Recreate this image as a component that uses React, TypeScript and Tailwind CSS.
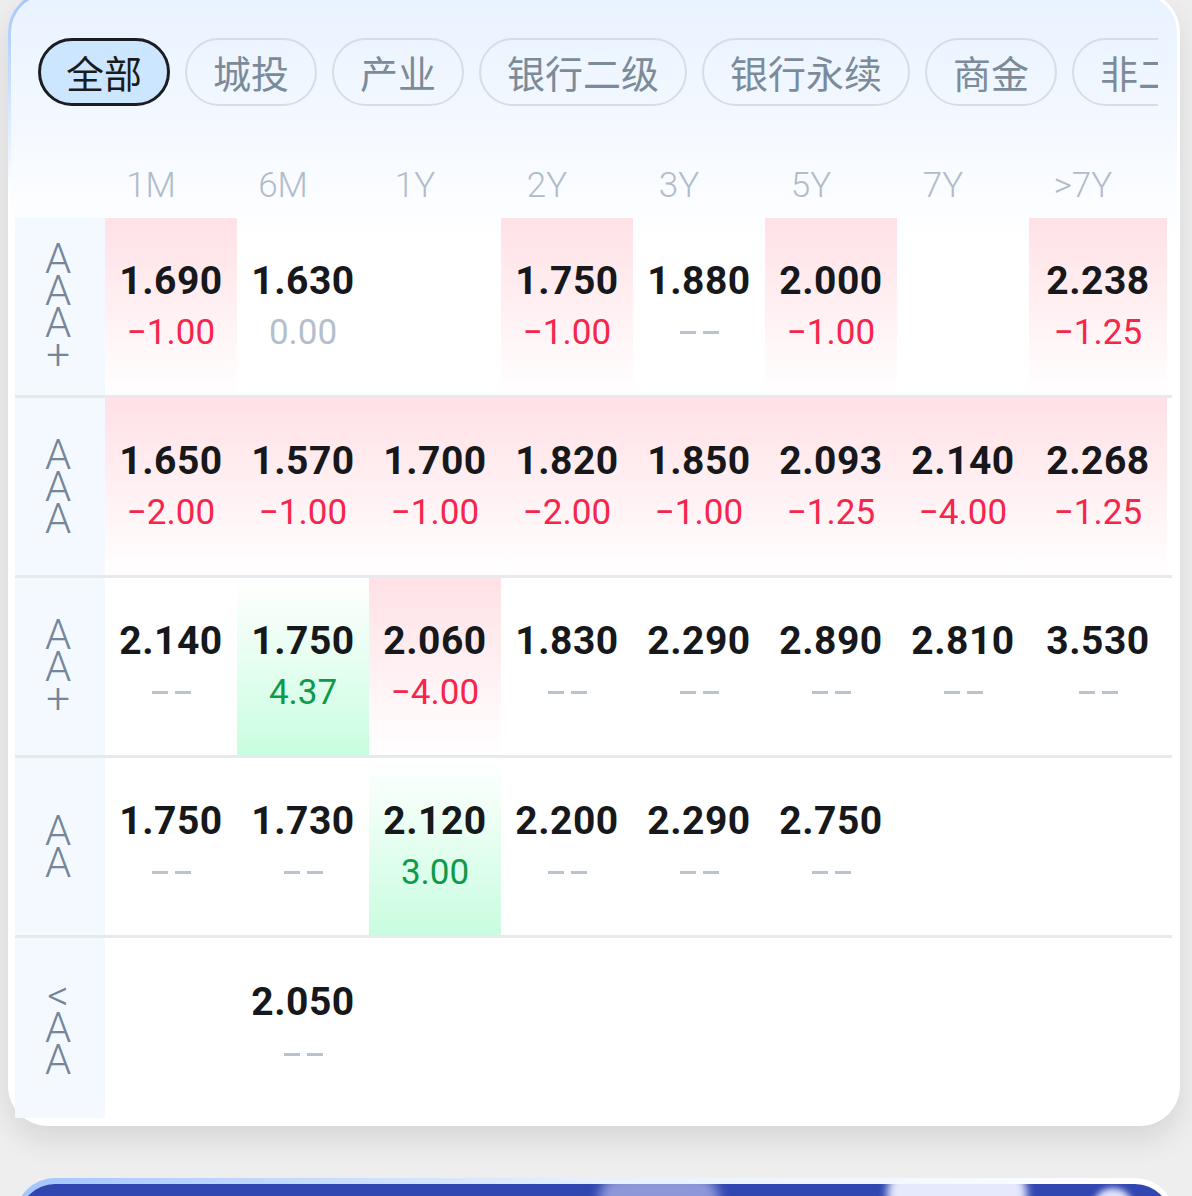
import React, { useState } from 'react';

type Cell = {
    value?: string;
    change?: string;
    tone?: 'down' | 'up' | 'flat' | 'none';
};

const tabs = ['全部', '城投', '产业', '银行二级', '银行永续', '商金', '非二级'];
const terms = ['1M', '6M', '1Y', '2Y', '3Y', '5Y', '7Y', '>7Y'];

const rows: { label: string; cells: Cell[] }[] = [
    {
        label: 'AAA+',
        cells: [
            { value: '1.690', change: '−1.00', tone: 'down' },
            { value: '1.630', change: '0.00', tone: 'flat' },
            {},
            { value: '1.750', change: '−1.00', tone: 'down' },
            { value: '1.880', tone: 'none' },
            { value: '2.000', change: '−1.00', tone: 'down' },
            {},
            { value: '2.238', change: '−1.25', tone: 'down' },
        ],
    },
    {
        label: 'AAA',
        cells: [
            { value: '1.650', change: '−2.00', tone: 'down' },
            { value: '1.570', change: '−1.00', tone: 'down' },
            { value: '1.700', change: '−1.00', tone: 'down' },
            { value: '1.820', change: '−2.00', tone: 'down' },
            { value: '1.850', change: '−1.00', tone: 'down' },
            { value: '2.093', change: '−1.25', tone: 'down' },
            { value: '2.140', change: '−4.00', tone: 'down' },
            { value: '2.268', change: '−1.25', tone: 'down' },
        ],
    },
    {
        label: 'AA+',
        cells: [
            { value: '2.140', tone: 'none' },
            { value: '1.750', change: '4.37', tone: 'up' },
            { value: '2.060', change: '−4.00', tone: 'down' },
            { value: '1.830', tone: 'none' },
            { value: '2.290', tone: 'none' },
            { value: '2.890', tone: 'none' },
            { value: '2.810', tone: 'none' },
            { value: '3.530', tone: 'none' },
        ],
    },
    {
        label: 'AA',
        cells: [
            { value: '1.750', tone: 'none' },
            { value: '1.730', tone: 'none' },
            { value: '2.120', change: '3.00', tone: 'up' },
            { value: '2.200', tone: 'none' },
            { value: '2.290', tone: 'none' },
            { value: '2.750', tone: 'none' },
            {},
            {},
        ],
    },
    {
        label: '<AA',
        cells: [{}, { value: '2.050', tone: 'none' }, {}, {}, {}, {}, {}, {}],
    },
];

const Dashes = () => (
    <div className="flex h-[52px] items-center gap-[7px]">
        <span className="block h-[3px] w-[16px] bg-[#b9c3d0]" />
        <span className="block h-[3px] w-[16px] bg-[#b9c3d0]" />
    </div>
);

const RateCell: React.FC<{ cell: Cell }> = ({ cell }) => {
    const bg =
        cell.tone === 'down'
            ? 'bg-gradient-to-b from-[#ffe1e6] to-white'
            : cell.tone === 'up'
              ? 'bg-gradient-to-b from-white to-[#c8fde0]'
              : '';

    return (
        <div className={`flex flex-col items-center justify-center ${bg}`}>
            {cell.value && (
                <div className="text-[39px] font-bold leading-[52px] tracking-[0.5px] text-[#16181b]">
                    {cell.value}
                </div>
            )}
            {cell.value && cell.tone === 'none' && <Dashes />}
            {cell.change && (
                <div
                    className={`text-[35px] leading-[52px] ${
                        cell.tone === 'down'
                            ? 'text-[#f6254b]'
                            : cell.tone === 'up'
                              ? 'text-[#0f9a4a]'
                              : 'text-[#b5bfcc]'
                    }`}
                >
                    {cell.change}
                </div>
            )}
        </div>
    );
};

const App: React.FC = () => {
    const [selectedTab, setSelectedTab] = useState('全部');

    return (
        <div
            className="h-[1196px] overflow-hidden bg-[#eeeeee]"
            style={{ fontFamily: 'Roboto, "Noto Sans CJK SC", sans-serif' }}
        >
            {/* rate card */}
            <div className="-mt-[8px] ml-[8px] w-[1172px] rounded-[40px] bg-[linear-gradient(165deg,#9fc5ff_0%,#ffffff_14%)] p-[3px] shadow-[0_14px_30px_rgba(0,0,0,0.1)]">
                <div className="rounded-[37px] bg-gradient-to-b from-[#e8f2ff] to-white to-[22%] pb-[5px] pt-[43px]">
                    <div className="ml-[27px] mr-[19px] flex gap-[15px] overflow-hidden">
                        {tabs.map((tab) => (
                            <button
                                key={tab}
                                onClick={() => setSelectedTab(tab)}
                                className={`h-[68px] shrink-0 rounded-full text-[38px] leading-[62px] ${
                                    selectedTab === tab
                                        ? 'border-[3px] border-[#1b1d21] bg-[#cde6ff] px-[25px] text-[#1b1b1b]'
                                        : 'border-2 border-[#d6dde5] px-[26px] text-[#7b8b99]'
                                }`}
                                style={{ fontFamily: '"Noto Sans CJK SC", sans-serif' }}
                            >
                                {tab}
                            </button>
                        ))}
                    </div>

                    <div className="ml-[4px] grid h-[112px] grid-cols-[70px_repeat(7,132px)_148px] items-end pb-[12px]">
                        <div />
                        {terms.map((t) => (
                            <div key={t} className="text-center text-[35px] font-light leading-[40px] text-[#b0bccb]">
                                {t}
                            </div>
                        ))}
                    </div>

                    <div className="ml-[4px] mr-[5px]">
                        {rows.map((row, i) => (
                            <div
                                key={row.label}
                                className={`grid h-[180px] grid-cols-[90px_repeat(7,132px)_138px] ${
                                    i < rows.length - 1 ? 'border-b-[3px] border-[#e6eaef]' : ''
                                }`}
                            >
                                <div className="flex flex-col items-center justify-center bg-[#f4f9ff] pr-[4px] text-[42px] font-light leading-[32px] text-[#74869a]">
                                    {Array.from(row.label).map((ch, k) => (
                                        <span key={k}>{ch}</span>
                                    ))}
                                </div>
                                {row.cells.map((cell, k) => (
                                    <RateCell key={k} cell={cell} />
                                ))}
                            </div>
                        ))}
                    </div>
                </div>
            </div>

            {/* banner below */}
            <div className="ml-[15px] mt-[52px] w-[1160px] rounded-[40px] bg-gradient-to-r from-[#a3c6ff] via-[#e6f0ff] to-white px-[4px] pt-[6px]">
                <div className="relative h-[200px] overflow-hidden rounded-[36px] bg-[#3146b0]">
                    <div className="absolute left-[580px] top-[-10px] h-[50px] w-[120px] rounded-full bg-[#8e97d8] blur-[6px]" />
                    <div className="absolute left-[868px] top-[-24px] h-[70px] w-[140px] rounded-full bg-[#e6e8fb] blur-[4px]" />
                    <div className="absolute left-[1074px] top-[4px] h-[40px] w-[40px] rounded-full bg-[#dfe3fa] blur-[3px]" />
                </div>
            </div>
        </div>
    );
};

export default App;
